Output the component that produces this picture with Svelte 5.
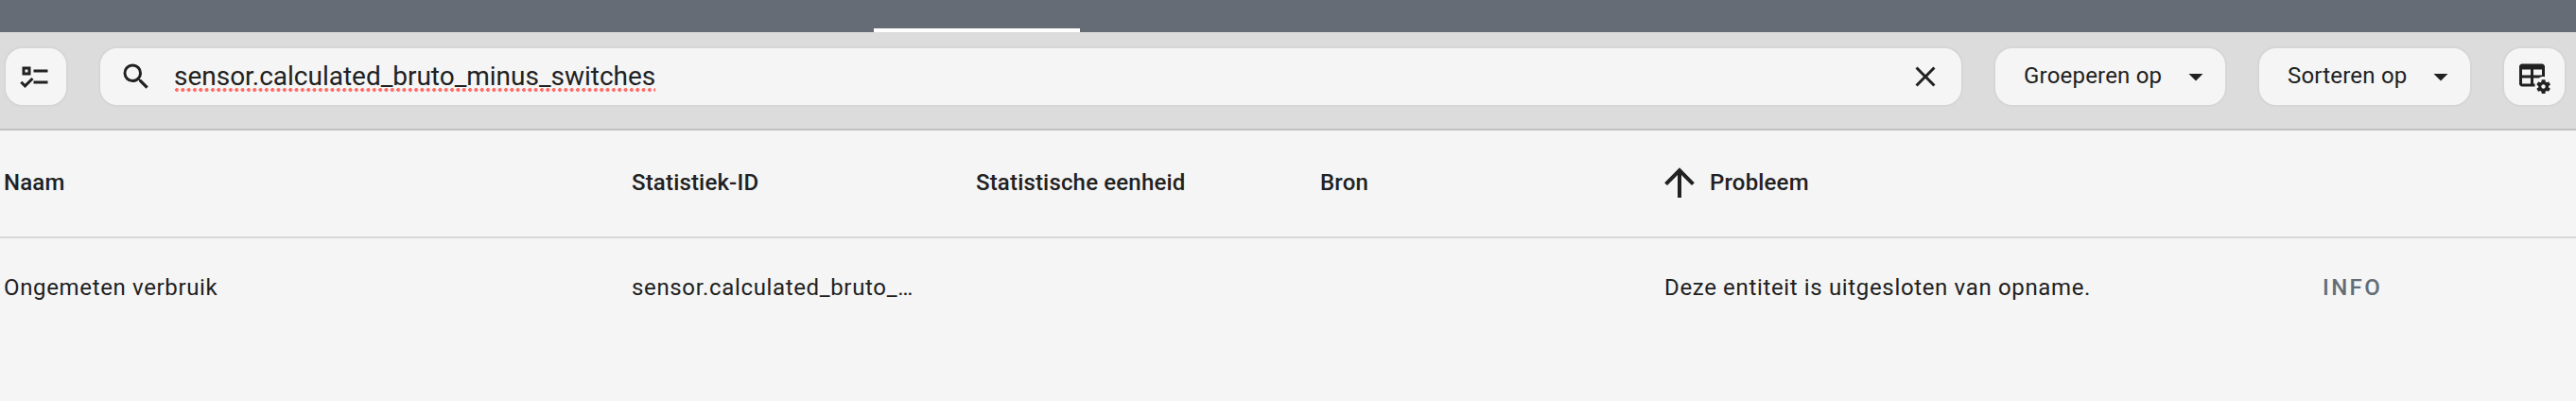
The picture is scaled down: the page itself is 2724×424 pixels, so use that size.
<script lang="ts">
	const icons = {
		checks:
			'M3,5H9V11H3V5M5,7V9H7V7H5M11,7H21V9H11V7M11,15H21V17H11V15M5,20L1.5,16.5L2.91,15.09L5,17.17L9.59,12.59L11,14L5,20Z',
		magnify:
			'M9.5,3A6.5,6.5 0 0,1 16,9.5C16,11.11 15.41,12.59 14.44,13.73L14.71,14H15.5L20.5,19L19,20.5L14,15.5V14.71L13.73,14.44C12.59,15.41 11.11,16 9.5,16A6.5,6.5 0 0,1 3,9.5A6.5,6.5 0 0,1 9.5,3M9.5,5C7,5 5,7 5,9.5C5,12 7,14 9.5,14C12,14 14,12 14,9.5C14,7 12,5 9.5,5Z',
		close:
			'M19,6.41L17.59,5L12,10.59L6.41,5L5,6.41L10.59,12L5,17.59L6.41,19L12,13.41L17.59,19L19,17.59L13.41,12L19,6.41Z',
		menuDown: 'M7,10L12,15L17,10H7Z',
		arrowUp:
			'M13,20H11V8L5.5,13.5L4.08,12.08L12,4.16L19.92,12.08L18.5,13.5L13,8V20Z',
		tableCog:
			'M4 3H18C19.11 3 20 3.9 20 5V12.17C18.5 11.72 16.91 12.03 15.68 13H12V17H13.08C12.97 17.68 12.97 18.35 13.08 19H4C2.9 19 2 18.11 2 17V5C2 3.9 2.9 3 4 3M4 7V11H10V7H4M12 7V11H18V7H12M4 13V17H10V13H4M22.7 19.6V18.6L23.8 17.8C23.9 17.7 24 17.6 23.9 17.5L22.9 15.8C22.9 15.7 22.7 15.7 22.6 15.7L21.4 16.2C21.1 16 20.8 15.8 20.5 15.7L20.3 14.4C20.3 14.3 20.2 14.2 20.1 14.2H18.1C17.9 14.2 17.8 14.3 17.8 14.4L17.6 15.7C17.3 15.9 17.1 16 16.8 16.2L15.6 15.7C15.5 15.7 15.4 15.7 15.3 15.8L14.3 17.5C14.3 17.6 14.3 17.7 14.4 17.8L15.5 18.6V19.6L14.4 20.4C14.3 20.5 14.2 20.6 14.3 20.7L15.3 22.4C15.4 22.5 15.5 22.5 15.6 22.5L16.8 22C17 22.2 17.3 22.4 17.6 22.5L17.8 23.8C17.9 23.9 18 24 18.1 24H20.1C20.2 24 20.3 23.9 20.3 23.8L20.5 22.5C20.8 22.3 21 22.2 21.3 22L22.5 22.4C22.6 22.4 22.7 22.4 22.8 22.3L23.8 20.6C23.9 20.5 23.9 20.4 23.8 20.4L22.7 19.6M19 20.5C18.2 20.5 17.5 19.8 17.5 19S18.2 17.5 19 17.5 20.5 18.2 20.5 19 19.8 20.5 19 20.5Z'
	};

	const columns = [
		{ title: 'Naam' },
		{ title: 'Statistiek-ID' },
		{ title: 'Statistische eenheid' },
		{ title: 'Bron' },
		{ title: 'Probleem', sorted: true },
		{ title: '' }
	];

	const rows = [
		{
			name: 'Ongemeten verbruik',
			id: 'sensor.calculated_bruto_minus_switches',
			unit: '',
			source: '',
			issue: 'Deze entiteit is uitgesloten van opname.'
		}
	];

	let search = 'sensor.calculated_bruto_minus_switches';
</script>

{#snippet icon(path: string)}
	<svg class="icon" viewBox="0 0 24 24" aria-hidden="true"><path d={path} /></svg>
{/snippet}

<div class="page">
	<div class="tabs"><div class="indicator"></div></div>

	<div class="toolbar">
		<button class="chip square" aria-label="Selecteren">{@render icon(icons.checks)}</button>
		<div class="chip search">
			{@render icon(icons.magnify)}
			<div class="query"><span>{search}</span></div>
			{@render icon(icons.close)}
		</div>
		<button class="chip group">
			<span class="label">Groeperen op</span>
			{@render icon(icons.menuDown)}
		</button>
		<button class="chip sort">
			<span class="label">Sorteren op</span>
			{@render icon(icons.menuDown)}
		</button>
		<button class="chip square" aria-label="Instellingen">
			{@render icon(icons.tableCog)}
		</button>
	</div>

	<div class="table" role="table">
		<div class="row header" role="row">
			{#each columns as column}
				<div class="cell" role="columnheader">
					{#if column.sorted}{@render icon(icons.arrowUp)}{/if}
					<span>{column.title}</span>
				</div>
			{/each}
		</div>
		{#each rows as row}
			<div class="row" role="row">
				<div class="cell" role="cell"><span>{row.name}</span></div>
				<div class="cell" role="cell"><span>{row.id}</span></div>
				<div class="cell" role="cell">{row.unit}</div>
				<div class="cell" role="cell">{row.source}</div>
				<div class="cell" role="cell"><span>{row.issue}</span></div>
				<div class="cell" role="cell"><button class="info">Info</button></div>
			</div>
		{/each}
	</div>
</div>

<style>
	:global(body) {
		background: #f5f5f5;
	}

	.page {
		height: 424px;
		overflow: hidden;
		background: #f5f5f5;
		color: #212121;
		font-family: Roboto, 'Noto Sans', sans-serif;
		font-size: 24px;
	}

	button {
		margin: 0;
		font: inherit;
		color: inherit;
	}

	.icon {
		display: block;
		flex: none;
		width: 36px;
		height: 36px;
		fill: currentColor;
	}

	/* Tabs */
	.tabs {
		display: flex;
		align-items: flex-end;
		height: 34px;
		padding-left: 924px;
		background: #656c75;
	}

	.indicator {
		width: 218px;
		height: 4px;
		background: #fff;
	}

	/* Toolbar */
	.toolbar {
		display: flex;
		align-items: flex-start;
		gap: 32px;
		box-sizing: border-box;
		height: 104px;
		padding: 15px 10px 0 4px;
		background: #dcdcdc;
		border-bottom: 2px solid #c0c0c0;
	}

	.chip {
		display: flex;
		align-items: center;
		box-sizing: border-box;
		height: 64px;
		padding: 0;
		background: #f5f5f5;
		border: 2px solid #d6d6d6;
		border-radius: 20px;
		letter-spacing: 0.2px;
		white-space: nowrap;
	}

	.label {
		margin-bottom: 2px;
	}

	.square {
		justify-content: center;
		width: 68px;
	}

	.square .icon {
		margin-right: 2px;
	}

	.search {
		flex: 1;
		padding: 0 20px;
		font-size: 28px;
		letter-spacing: -0.02px;
	}

	.query {
		flex: 1;
		margin: 0 0 1px 22px;
	}

	/* Spelling marker */
	.query span {
		background: radial-gradient(circle at 3px 2px, #ff6c65 1.7px, transparent 2.2px) 0 100% / 6.33px
			4px repeat-x;
	}

	.group,
	.sort {
		justify-content: space-between;
		padding: 0 13px 0 30px;
	}

	.group {
		width: 247px;
	}

	.sort {
		width: 227px;
	}

	/* Table */
	.row {
		display: grid;
		grid-template-columns: 664px repeat(3, 364px) 696px 1fr;
		align-items: center;
		height: 104px;
		padding-left: 4px;
		letter-spacing: 0.65px;
	}

	.cell {
		display: flex;
		align-items: center;
		min-width: 0;
		padding-right: 60px;
	}

	.cell span {
		overflow: hidden;
		text-overflow: ellipsis;
		white-space: nowrap;
	}

	.header {
		box-sizing: border-box;
		height: 114px;
		padding-bottom: 2px;
		border-bottom: 2px solid #d8d8d8;
		font-weight: 500;
		letter-spacing: 0.0071428571em;
	}

	.header .icon {
		width: 48px;
		height: 48px;
		margin: 0 8px 0 -8px;
	}

	.info {
		padding: 0;
		background: none;
		border: 0;
		color: #656c75;
		font-weight: 500;
		letter-spacing: 0.1em;
		text-transform: uppercase;
	}
</style>
